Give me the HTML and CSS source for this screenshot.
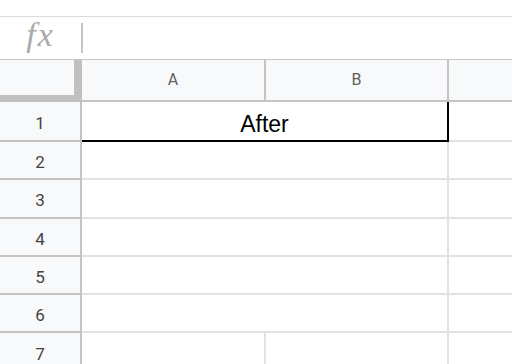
FILE: index.html
```html
<!DOCTYPE html>
<html lang="en">
<head>
  <meta charset="UTF-8">
  <title>Sheet</title>
  <link rel="stylesheet" href="styles.css">
</head>
<body>

  <!-- Strip above formula bar -->
  <div class="top-strip"></div>

  <!-- Formula bar -->
  <div class="formula-bar">
    <div class="fx">fx</div>
    <div class="fx-divider"></div>
  </div>

  <!-- Grid -->
  <div class="sheet">
    <div class="corner"></div>
    <div class="col-head">A</div>
    <div class="col-head">B</div>
    <div class="col-head last"></div>

    <div class="row-head">1</div>
    <div class="cell merged selected">After</div>
    <div class="cell"></div>

    <div class="row-head">2</div>
    <div class="cell merged"></div>
    <div class="cell"></div>

    <div class="row-head">3</div>
    <div class="cell merged"></div>
    <div class="cell"></div>

    <div class="row-head">4</div>
    <div class="cell merged"></div>
    <div class="cell"></div>

    <div class="row-head">5</div>
    <div class="cell merged"></div>
    <div class="cell"></div>

    <div class="row-head">6</div>
    <div class="cell merged"></div>
    <div class="cell"></div>

    <div class="row-head">7</div>
    <div class="cell split"></div>
    <div class="cell split"></div>
    <div class="cell"></div>
  </div>

</body>
</html>
```

FILE: styles.css
```css
/* Page */
body {
  margin: 0;
  background-color: #fff;
  font-family: "Liberation Sans", Arial, sans-serif;
  overflow: hidden;
}

/* Thin strip above formula bar */
.top-strip {
  height: 16px;
  border-bottom: 1px solid #dadce0;
}

/* Formula bar */
.formula-bar {
  height: 42px;
  display: flex;
  align-items: center;
  border-bottom: 1px solid #c8c8c8;
}

.formula-bar .fx {
  width: 81px;
  text-align: center;
  font-family: "Liberation Serif", "Times New Roman", serif;
  font-style: italic;
  font-size: 34px;
  letter-spacing: 2px;
  color: #ababab;
  margin-top: -6px;
}

.formula-bar .fx-divider {
  width: 2px;
  height: 30px;
  background-color: #c4c4c4;
}

/* Sheet grid */
.sheet {
  display: grid;
  grid-template-columns: 82px 184px 183px 1fr;
  grid-template-rows: 42px 40px repeat(6, 38.3px);
}

.sheet > div {
  box-sizing: border-box;
}

/* Frozen corner with freeze handles */
.corner {
  background-color: #f8f9fa;
  border-right: 8px solid #c0c0c0;
  border-bottom: 7px solid #c0c0c0;
}

.col-head {
  background-color: #f8f9fa;
  border-right: 2px solid #c4c4c4;
  border-bottom: 2px solid #c4c4c4;
  display: flex;
  align-items: center;
  justify-content: center;
  font-family: Roboto, "Liberation Sans", sans-serif;
  font-size: 16px;
  color: #5f5f5f;
  padding-bottom: 2px;
}

.col-head.last {
  border-right: none;
}

.row-head {
  background-color: #f8f9fa;
  border-right: 2px solid #c4c4c4;
  border-bottom: 2px solid #c4c4c4;
  display: flex;
  align-items: center;
  justify-content: center;
  font-family: Roboto, "Liberation Sans", sans-serif;
  font-size: 17px;
  color: #444;
  padding-top: 4px;
}

/* Cells */
.cell {
  border-bottom: 2px solid #e2e2e2;
}

.cell.merged {
  grid-column: span 2;
  border-right: 2px solid #e2e2e2;
  display: flex;
  align-items: center;
  justify-content: center;
  font-size: 23px;
  color: #000;
}

.cell.split {
  border-right: 2px solid #e2e2e2;
}

.cell.selected {
  border-right: 2px solid #000;
  border-bottom: 2px solid #000;
  padding-top: 6px;
}
```
